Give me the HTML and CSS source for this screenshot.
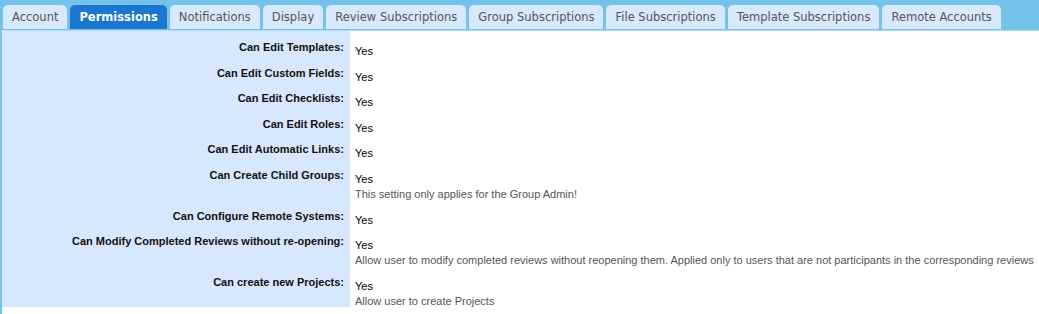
FILE: index.html
```html
<!DOCTYPE html>
<html lang="en">
<head>
<meta charset="UTF-8">
<title>User Preferences - Permissions</title>
<link rel="stylesheet" href="styles.css">
</head>
<body>
	<div class="tab-bar">
		<ul class="tabs">
			<li><a href="#">Account</a></li>
			<li class="active"><a href="#">Permissions</a></li>
			<li><a href="#">Notifications</a></li>
			<li><a href="#">Display</a></li>
			<li><a href="#">Review Subscriptions</a></li>
			<li><a href="#">Group Subscriptions</a></li>
			<li><a href="#">File Subscriptions</a></li>
			<li><a href="#">Template Subscriptions</a></li>
			<li><a href="#">Remote Accounts</a></li>
		</ul>
	</div>

	<div class="panel">
		<table class="settings">
			<tr>
				<td class="label">Can Edit Templates:</td>
				<td class="value"><div class="yes">Yes</div></td>
			</tr>
			<tr>
				<td class="label">Can Edit Custom Fields:</td>
				<td class="value"><div class="yes">Yes</div></td>
			</tr>
			<tr>
				<td class="label">Can Edit Checklists:</td>
				<td class="value"><div class="yes">Yes</div></td>
			</tr>
			<tr>
				<td class="label">Can Edit Roles:</td>
				<td class="value"><div class="yes">Yes</div></td>
			</tr>
			<tr>
				<td class="label">Can Edit Automatic Links:</td>
				<td class="value"><div class="yes">Yes</div></td>
			</tr>
			<tr>
				<td class="label">Can Create Child Groups:</td>
				<td class="value">
					<div class="yes">Yes</div>
					<div class="hint">This setting only applies for the Group Admin!</div>
				</td>
			</tr>
			<tr>
				<td class="label">Can Configure Remote Systems:</td>
				<td class="value"><div class="yes">Yes</div></td>
			</tr>
			<tr>
				<td class="label">Can Modify Completed Reviews without re-opening:</td>
				<td class="value">
					<div class="yes">Yes</div>
					<div class="hint">Allow user to modify completed reviews without reopening them. Applied only to users that are not participants in the corresponding reviews</div>
				</td>
			</tr>
			<tr>
				<td class="label">Can create new Projects:</td>
				<td class="value">
					<div class="yes">Yes</div>
					<div class="hint">Allow user to create Projects</div>
				</td>
			</tr>
		</table>
	</div>
</body>
</html>
```

FILE: styles.css
```css
body {
	margin: 0;
	background: #fff;
	font-family: "Liberation Sans", Arial, sans-serif;
}

/* tab strip */
.tab-bar {
	background: #73c3eb;
	height: 30px;
	padding-left: 3px;
	box-sizing: border-box;
}
.tabs {
	list-style: none;
	margin: 0;
	padding: 5px 0 0 0;
	display: flex;
	gap: 3px;
}
.tabs li {
	background: #d8e8fd;
	border-radius: 5px 5px 0 0;
	height: 24px;
}
.tabs li a {
	display: block;
	padding: 0 9px;
	line-height: 25px;
	font-family: "DejaVu Sans", Verdana, sans-serif;
	font-size: 11.5px;
	color: #5a5550;
	text-decoration: none;
}
.tabs li.active {
	background: #1a76cf;
}
.tabs li.active a {
	color: #fff;
	font-weight: bold;
}

/* settings panel */
.panel {
	border-left: 2px solid #73c3eb;
	border-top: 1px solid #b2dcf3;
	min-height: 283px;
}
.settings {
	width: 100%;
	border-collapse: collapse;
	font-size: 11px;
}
.settings td {
	padding: 0;
	vertical-align: top;
}
.settings .label {
	width: 342px;
	background: #d7e7fd;
	text-align: right;
	font-weight: bold;
	color: #111;
	line-height: 13px;
	padding: 10px 6px 0 0;
}
.settings tr:first-child .label {
	border-top-left-radius: 3px;
}
.settings .value {
	padding: 15px 0 0 5px;
	color: #000;
}
.yes {
	line-height: 10.5px;
}
.hint {
	margin-top: 3.5px;
	line-height: 12px;
	color: #555;
}
```
